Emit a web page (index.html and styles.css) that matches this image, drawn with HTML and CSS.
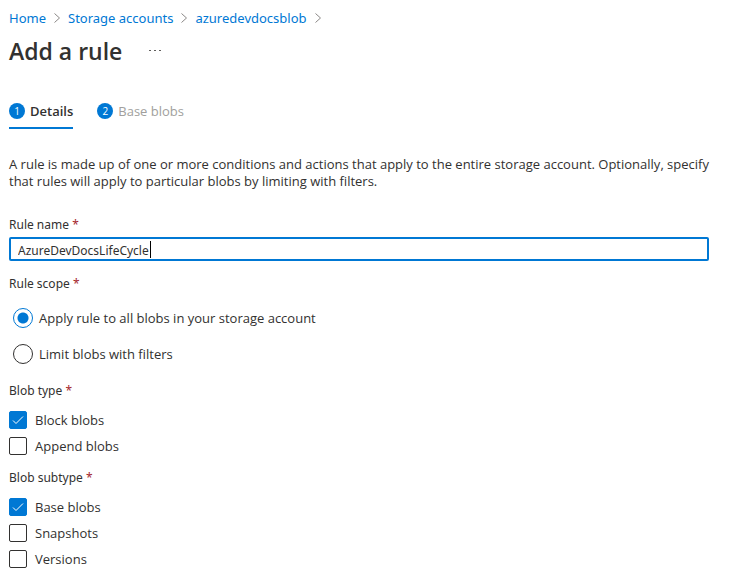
FILE: index.html
```html
<!DOCTYPE html>
<html lang="en">
<head>
<meta charset="utf-8">
<title>Add a rule</title>
<link rel="stylesheet" href="styles.css">
</head>
<body>
<nav class="breadcrumb" aria-label="Breadcrumb">
  <a href="#">Home</a>
  <svg class="chevron" viewBox="0 0 6 10"><path d="M.5.5 5.5 5 .5 9.5"/></svg>
  <a href="#">Storage accounts</a>
  <svg class="chevron" viewBox="0 0 6 10"><path d="M.5.5 5.5 5 .5 9.5"/></svg>
  <a href="#">azuredevdocsblob</a>
  <svg class="chevron" viewBox="0 0 6 10"><path d="M.5.5 5.5 5 .5 9.5"/></svg>
</nav>
<header class="heading">
  <h1>Add a rule</h1>
  <button class="more" type="button" aria-label="More actions">
    <svg viewBox="0 0 12 2"><path d="M0 0h2v1H0zM5 0h2v1H5zM10 0h2v1h-2z"/></svg>
  </button>
</header>
<div class="tabs" role="tablist">
  <button class="tab active" type="button" role="tab" aria-selected="true"><span class="step">1</span>Details</button>
  <button class="tab" type="button" role="tab" aria-selected="false"><span class="step">2</span>Base blobs</button>
</div>
<main>
  <p class="intro">A rule is made up of one or more conditions and actions that apply to the entire storage account. Optionally, specify that rules will apply to particular blobs by limiting with filters.</p>
  <form>
    <label class="caption" for="rule-name">Rule name <span class="required">*</span></label>
    <div class="field">
      <input id="rule-name" class="textbox" type="text" value="AzureDevDocsLifeCycle">
      <span class="caret"></span>
    </div>
    <fieldset class="radios">
      <legend class="caption">Rule scope <span class="required">*</span></legend>
      <label class="radio"><input type="radio" name="scope" checked>Apply rule to all blobs in your storage account</label>
      <label class="radio"><input type="radio" name="scope">Limit blobs with filters</label>
    </fieldset>
    <fieldset class="checks">
      <legend class="caption">Blob type <span class="required">*</span></legend>
      <label class="check"><span class="box"><input type="checkbox" checked><svg viewBox="0 0 18 18"><path d="m4 9.500 3 3 7-7"/></svg></span>Block blobs</label>
      <label class="check"><span class="box"><input type="checkbox"></span>Append blobs</label>
    </fieldset>
    <fieldset class="checks">
      <legend class="caption">Blob subtype <span class="required">*</span></legend>
      <label class="check"><span class="box"><input type="checkbox" checked><svg viewBox="0 0 18 18"><path d="m4 9.500 3 3 7-7"/></svg></span>Base blobs</label>
      <label class="check"><span class="box"><input type="checkbox"></span>Snapshots</label>
      <label class="check"><span class="box"><input type="checkbox"></span>Versions</label>
    </fieldset>
  </form>
</main>
</body>
</html>
```
FILE: styles.css
```css
* { box-sizing: border-box; }
body {
  margin: 0;
  padding: 9px 38px 12px 9px;
  background: #fff;
  color: #323130;
  font: 13px/17px "Segoe UI", "Open Sans", "Noto Sans", sans-serif;
}
button, input { font: inherit; color: inherit; margin: 0; }
button { border: 0; padding: 0; background: none; }
.breadcrumb {
  display: flex;
  align-items: center;
  gap: 8px;
  font-family: "Segoe UI", "Noto Sans", sans-serif;
  line-height: 18px;
}
.breadcrumb a { color: #0078d4; text-decoration: none; }
.chevron { width: 6px; height: 10px; fill: none; stroke: #8a8886; }
.heading { display: flex; align-items: center; gap: 27px; margin-top: 8px; }
h1 { margin: 0; font-size: 23px; line-height: 32px; font-weight: 600; }
.more { display: flex; align-items: center; height: 24px; }
.more svg { width: 12px; height: 2px; fill: #605e5c; }
.tabs { display: flex; gap: 24px; margin-top: 28px; }
.tab {
  display: flex;
  align-items: center;
  gap: 5px;
  height: 34px;
  border-bottom: 2px solid transparent;
  color: #a19f9d;
}
.tab.active { border-color: #0078d4; color: #323130; font-weight: 600; }
.step {
  width: 16px;
  height: 16px;
  border-radius: 50%;
  background: #0078d4;
  color: #fff;
  font-size: 10px;
  font-weight: 400;
  line-height: 17px;
  text-align: center;
}
.intro { margin: 27px 0 26px; }
.caption { display: block; padding: 0; height: 21px; font-size: 12px; font-family: "Segoe UI", "Noto Sans", sans-serif; }
.required { color: #a4262c; }
.field { position: relative; }
.textbox {
  display: block;
  width: 100%;
  height: 24px;
  padding: 2px 7px 0;
  border: 2px solid #0078d4;
  border-radius: 2px;
  background: #fff;
  outline: 0;
  font-family: "Segoe UI", "Noto Sans", sans-serif;
  font-size: 12px;
}
.caret { position: absolute; left: 141px; top: 4px; width: 1px; height: 17px; background: #000; }
fieldset { min-width: 0; margin: 0; padding: 0; border: 0; }
fieldset .caption { height: 25px; }
.radios { margin-top: 14px; }
.radio { display: flex; align-items: center; gap: 6px; height: 36px; padding-left: 4px; }
.radio input {
  appearance: none;
  width: 20px;
  height: 20px;
  border: 1px solid #323130;
  border-radius: 50%;
}
.radio input:checked { border-color: #0078d4; background: radial-gradient(circle, #0078d4 5px, transparent 6px); }
.checks { margin-top: 10px; }
.check { display: flex; align-items: center; gap: 8px; height: 26px; }
.box { display: grid; width: 18px; height: 18px; }
.box > * { grid-area: 1 / 1; width: 18px; height: 18px; }
.box input { appearance: none; border: 1px solid #323130; border-radius: 2px; }
.box input:checked { border-color: #0078d4; background: #0078d4; }
.box svg { fill: none; stroke: #fff; pointer-events: none; }
```
